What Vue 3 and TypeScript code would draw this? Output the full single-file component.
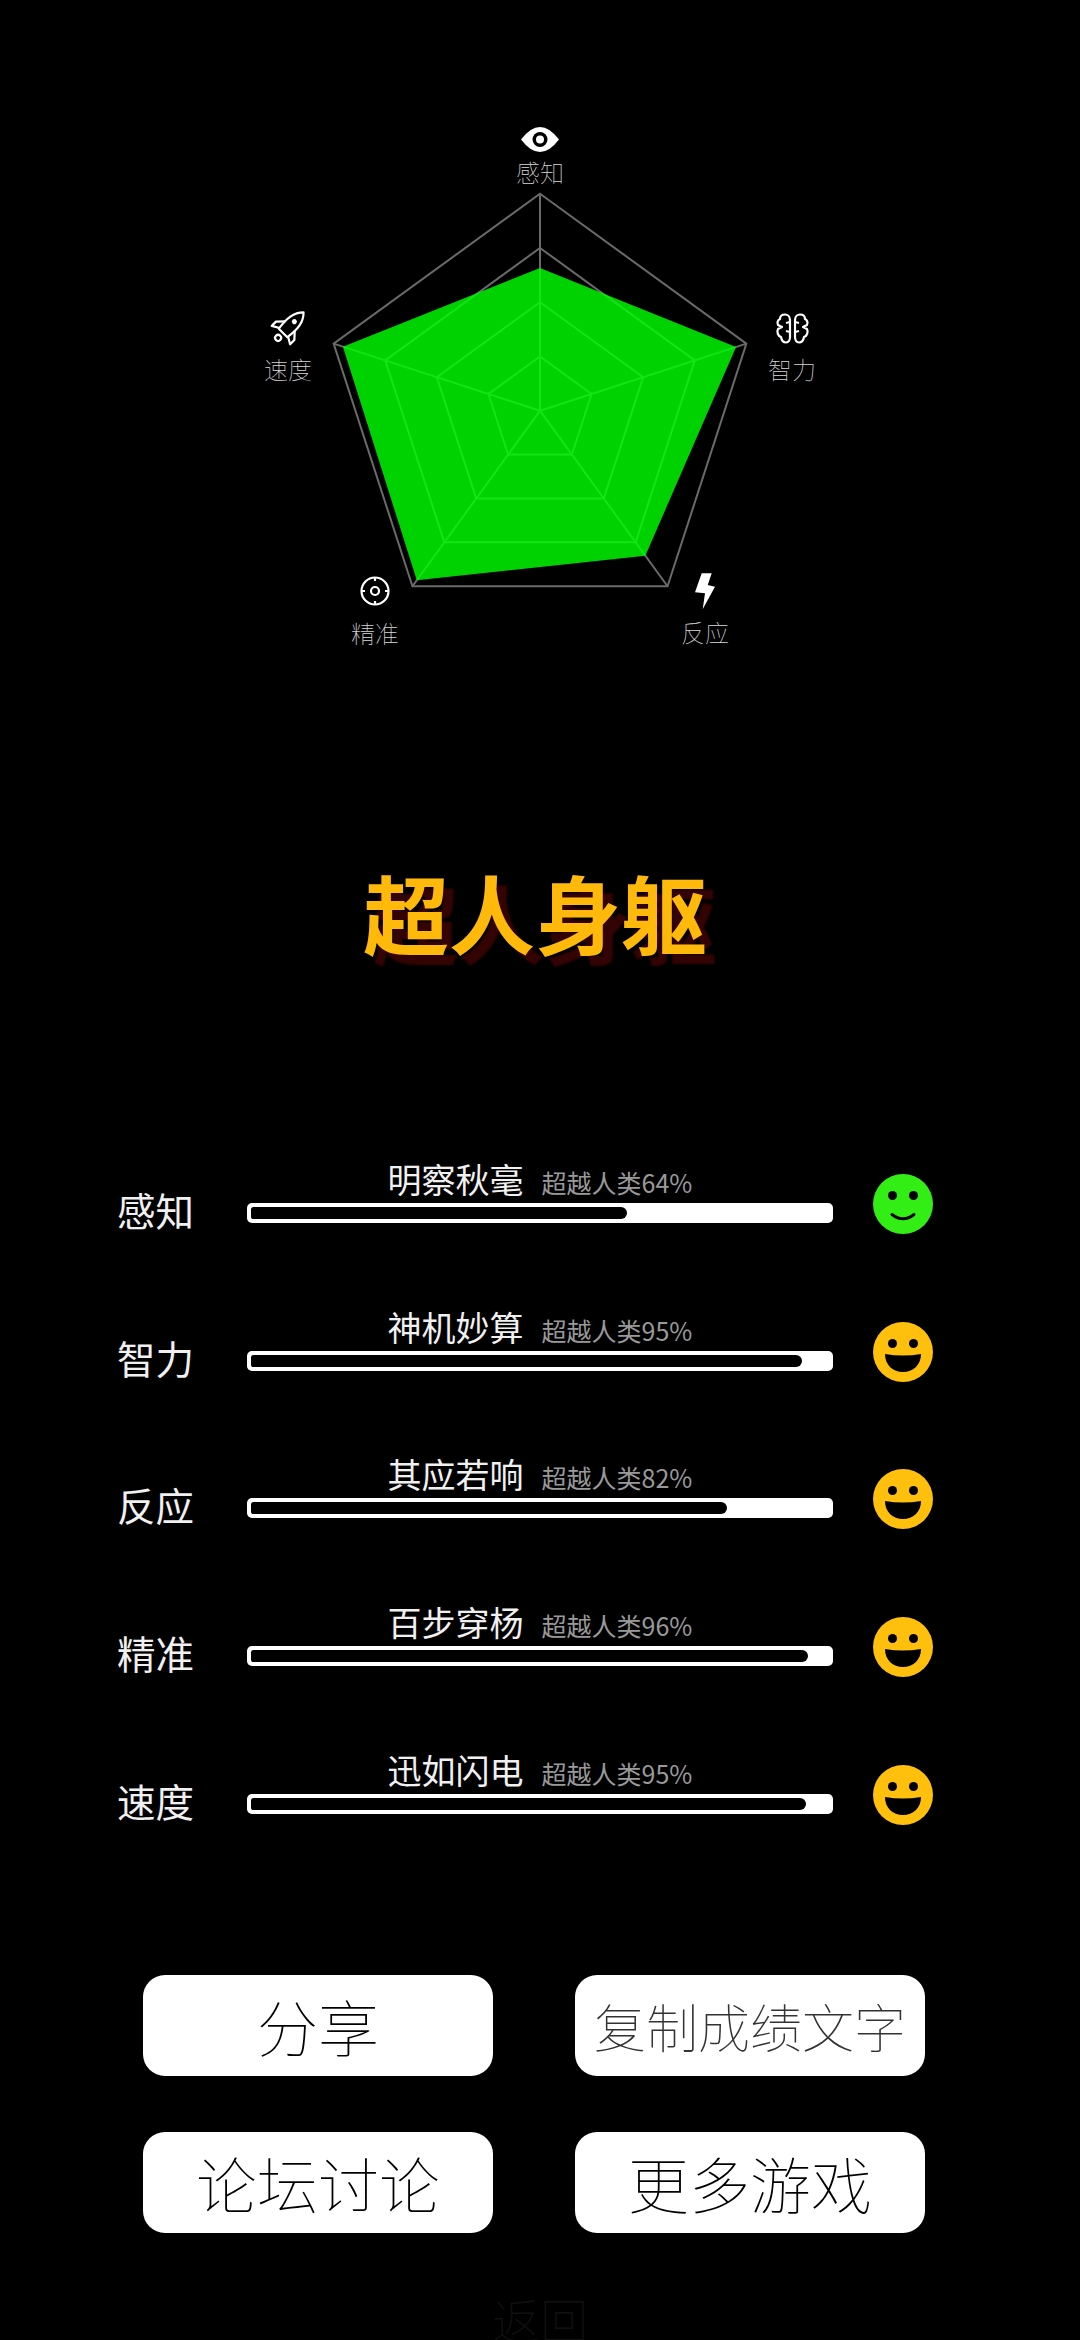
<script setup lang="ts">
interface Stat {
  name: string
  title: string
  score: number
  pct: number
  labelX: number
  labelY: number
}

const CX = 540
const CY = 410.7
const R = 217

const stats: Stat[] = [
  { name: '感知', title: '明察秋毫', score: 64, pct: 65, labelX: 540, labelY: 171 },
  { name: '智力', title: '神机妙算', score: 95, pct: 95.3, labelX: 792, labelY: 368 },
  { name: '反应', title: '其应若响', score: 82, pct: 82.4, labelX: 705, labelY: 631 },
  { name: '精准', title: '百步穿杨', score: 96, pct: 96.4, labelX: 375, labelY: 632 },
  { name: '速度', title: '迅如闪电', score: 95, pct: 96, labelX: 288, labelY: 368 }
]

const buttons: string[] = ['分享', '复制成绩文字', '论坛讨论', '更多游戏']

function corner(i: number, r: number): [number, number] {
  const a = (Math.PI * 2 * i) / 5
  return [CX + Math.sin(a) * r, CY - Math.cos(a) * r]
}

function ring(scale: number): string {
  return stats.map((_s, i) => corner(i, R * scale).join(',')).join(' ')
}

const rings = [0.25, 0.5, 0.75, 1].map(ring)
const spokes = stats.map((_s, i) => corner(i, R))
// radar shape uses the measured values, a little off the bar ones
const radarPct = [65.8, 95, 82.6, 96.6, 95.5]
const shape = radarPct.map((p, i) => corner(i, (R * p) / 100).join(',')).join(' ')
</script>

<template>
  <div class="page">
    <svg class="radar" viewBox="0 0 1080 700" width="1080" height="700">
      <g class="grid-lines">
        <polygon v-for="(pts, i) in rings" :key="i" :points="pts" />
        <line v-for="(p, i) in spokes" :key="i" :x1="CX" :y1="CY" :x2="p[0]" :y2="p[1]" />
      </g>
      <polygon class="shape" :points="shape" />

      <!-- eye -->
      <path class="solid" d="M521 139.5Q540 114.5 559 139.5Q540 164.5 521 139.5Z" />
      <circle cx="540" cy="139.5" r="7.5" fill="#000" />
      <circle class="solid" cx="540" cy="139.5" r="4" />

      <!-- brain -->
      <g class="outline">
        <path d="M790 320C790 316 787 314.500 785 314.500C782 314.500 780 316 780 319C777.500 320 777 323 778 325L782 327L778 329C776.500 332 778 336 781 337C781.500 340 783.500 342.500 786 342.500C788.500 342.500 790 340 790 337Z" />
        <path d="M790 322L786 323M790 332L786 331" />
        <path d="M795 320C795 316 798 314.500 800 314.500C803 314.500 805 316 805 319C807.500 320 808 323 807 325L803 327L807 329C808.500 332 807 336 804 337C803.500 340 801.500 342.500 799 342.500C796.500 342.500 795 340 795 337Z" />
        <path d="M795 322L799 323M795 332L799 331" />
      </g>

      <!-- bolt -->
      <polygon class="solid" points="701.7,573.3 711.7,573.3 707.7,585 715,586.7 702.7,609.3 705,593.3 695,592.3" />

      <!-- target -->
      <g class="outline">
        <circle cx="375" cy="591" r="13.5" />
        <circle cx="375" cy="591" r="4" />
        <path d="M375 577.5V581M375 601V604.5M361.5 591H365M385 591H388.5" />
      </g>

      <!-- rocket -->
      <g class="outline" transform="translate(288 328) rotate(45)">
        <path d="M0 -22C7 -15 8 -6 6 7H-6C-8 -6 -7 -15 0 -22Z" />
        <path d="M-6.500 -3L-13 4V10L-6 6M6.500 -3L13 4V10L6 6" />
        <circle cx="0" cy="14" r="3" />
        <circle class="solid" cx="0" cy="-9" r="2.500" />
      </g>

      <text v-for="s in stats" :key="s.name" class="axis" :x="s.labelX" :y="s.labelY" text-anchor="middle" dominant-baseline="central">{{ s.name }}</text>
    </svg>

    <h1 class="heading">超人身躯</h1>

    <div class="rows">
      <div v-for="s in stats" :key="s.name" class="row">
        <div class="row-name">{{ s.name }}</div>
        <div class="row-main">
          <div class="caption">
            <span class="caption-title">{{ s.title }}</span>
            <span class="caption-sub">超越人类{{ s.score }}%</span>
          </div>
          <div class="track">
            <div class="fill" :style="{ width: s.pct + '%' }"></div>
          </div>
        </div>
        <svg class="face" viewBox="0 0 60 60" width="60" height="60">
          <circle cx="30" cy="30" r="30" :fill="s.score >= 80 ? '#ffbf0d' : '#33ee14'" />
          <circle cx="19.500" cy="21.500" r="4.500" fill="#000" />
          <circle cx="40.500" cy="21.500" r="4.500" fill="#000" />
          <path v-if="s.score >= 80" d="M12 32Q30 35 48 32C48 43 40 50 30 50S12 43 12 32Z" fill="#000" />
          <path v-else d="M19 40.500Q30 49 41 40.500" fill="none" stroke="#000" stroke-width="3" stroke-linecap="round" />
        </svg>
      </div>
    </div>

    <div class="actions">
      <div v-for="b in buttons" :key="b" class="btn" :class="{ small: b.length > 4 }">{{ b }}</div>
    </div>

    <div class="back">返回</div>
  </div>
</template>

<style scoped>
.page {
  width: 1080px;
  height: 2340px;
  overflow: hidden;
  background: #000;
  display: flex;
  flex-direction: column;
  font-family: "Noto Sans CJK SC", "Noto Sans", sans-serif;
}

.radar {
  display: block;
  flex: none;
}

.grid-lines polygon,
.grid-lines line {
  fill: none;
  stroke: #6a6a6a;
  stroke-width: 2;
}

.shape {
  fill: #00ff00;
  fill-opacity: 0.82;
}

.solid {
  fill: #fff;
  stroke: none;
}

.outline {
  fill: none;
  stroke: #fff;
  stroke-width: 2.2;
  stroke-linejoin: round;
}

.axis {
  fill: #d8d8d8;
  font-size: 24px;
  font-weight: 100;
}

.heading {
  flex: none;
  margin: 152px 0 0;
  height: 120px;
  padding-right: 10px;
  font-size: 86px;
  line-height: 120px;
  font-weight: 700;
  text-align: center;
  color: #ffb90a;
  text-shadow: 10px 10px 2px #340404;
}

.rows {
  flex: none;
  margin-top: 158px;
}

.row {
  display: flex;
  align-items: flex-start;
  height: 147.700px;
  padding-left: 117px;
}

.row-name {
  width: 130px;
  margin-top: 53px;
  font-size: 38.500px;
  line-height: 52px;
  color: #f0f0f0;
  font-weight: 400;
}

.row-main {
  width: 586px;
  margin-top: 26px;
}

.caption {
  display: flex;
  justify-content: center;
  align-items: baseline;
  gap: 18px;
  height: 47px;
  line-height: 46px;
}

.caption-title {
  font-size: 34px;
  color: #f0f0f0;
}

.caption-sub {
  font-size: 25px;
  color: #999;
}

.track {
  height: 20px;
  box-sizing: border-box;
  padding: 4px;
  background: #fff;
  border-radius: 5px;
}

.fill {
  height: 12px;
  background: #000;
  border-radius: 3px 7px 7px 3px;
}

.face {
  flex: none;
  margin: 44px 0 0 40px;
}

.actions {
  flex: none;
  display: grid;
  grid-template-columns: 350px 350px;
  column-gap: 82px;
  row-gap: 56px;
  margin-top: 107px;
  padding-left: 143px;
}

.btn {
  height: 101px;
  background: #fff;
  border-radius: 22px;
  color: #000;
  font-size: 61px;
  font-weight: 100;
  line-height: 101px;
  text-align: center;
}

.btn.small {
  font-size: 52px;
  color: #333;
}

.back {
  flex: none;
  margin-top: 50px;
  font-size: 48px;
  line-height: 70px;
  font-weight: 100;
  text-align: center;
  color: #111;
}
</style>

<style>
html,
body {
  margin: 0;
  background: #000;
}
</style>
